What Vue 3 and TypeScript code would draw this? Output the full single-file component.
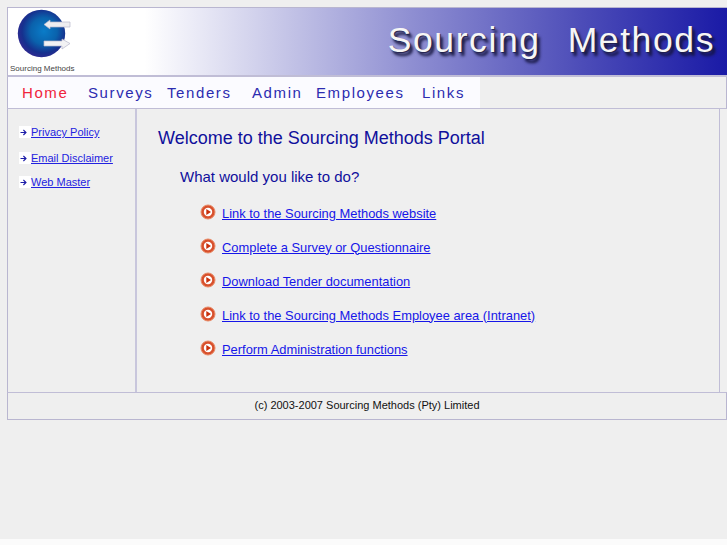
<script setup lang="ts">
const navItems = [
  { label: 'Home', width: 66, active: true },
  { label: 'Surveys', width: 79 },
  { label: 'Tenders', width: 85 },
  { label: 'Admin', width: 64 },
  { label: 'Employees', width: 106 },
  { label: 'Links', width: 50 },
]
const sideLinks = ['Privacy Policy', 'Email Disclaimer', 'Web Master']
const mainLinks = [
  'Link to the Sourcing Methods website',
  'Complete a Survey or Questionnaire',
  'Download Tender documentation',
  'Link to the Sourcing Methods Employee area (Intranet)',
  'Perform Administration functions',
]
</script>

<template>
  <div class="screen">
    <div class="page">
      <header class="banner">
        <div class="logo">
          <svg class="logo-mark" width="56" height="50" viewBox="0 0 56 50">
            <defs>
              <radialGradient id="sphere" cx="0.55" cy="0.45" r="0.56">
                <stop offset="0" stop-color="#0a7cc8" />
                <stop offset="0.5" stop-color="#0a62ac" />
                <stop offset="0.82" stop-color="#16308e" />
                <stop offset="1" stop-color="#2c2a90" />
              </radialGradient>
            </defs>
            <circle cx="24.500" cy="24.500" r="23.700" fill="url(#sphere)" />
            <path d="M27 15.500 L33 11 L33 13 L53 13 L53 18 L33 18 L33 20 Z" fill="#ededf0" stroke="#b8b8cc" stroke-width="0.700" />
            <path d="M27 32 L45 32 L45 30 L53 34.500 L45 40 L45 37 L27 37 Z" fill="#f2f2f4" stroke="#b8b8cc" stroke-width="0.700" />
          </svg>
          <span class="logo-text">Sourcing Methods</span>
        </div>
        <div class="banner-title"><span>Sourcing</span><span>Methods</span></div>
      </header>

      <nav class="nav">
        <div class="nav-items">
          <a
            v-for="item in navItems"
            :key="item.label"
            class="nav-link"
            :class="{ active: item.active }"
            :style="{ width: item.width + 'px' }"
          >{{ item.label }}</a>
        </div>
      </nav>

      <div class="body-row">
        <aside class="sidebar">
          <div v-for="link in sideLinks" :key="link" class="side-row">
            <span class="side-icon">
              <svg width="7" height="7" viewBox="0 0 7 7">
                <path d="M0.500 3.500 H5.800 M3.400 1 L6 3.500 L3.400 6" fill="none" stroke="#1c1ca8" stroke-width="1.100" />
              </svg>
            </span>
            <a href="#" class="side-link">{{ link }}</a>
          </div>
        </aside>
        <main class="main">
          <h1 class="title">Welcome to the Sourcing Methods Portal</h1>
          <h2 class="subtitle">What would you like to do?</h2>
          <ul class="actions">
            <li v-for="link in mainLinks" :key="link" class="action">
              <svg class="bullet" width="16" height="16" viewBox="0 0 16 16">
                <circle cx="8" cy="8" r="7" fill="#d8502c" stroke="#e88a66" stroke-width="1" />
                <circle cx="8" cy="8" r="4.200" fill="#fff" />
                <path d="M6.300 5 L11 8 L6.300 11 Z" fill="#c8300c" />
              </svg>
              <a href="#" class="action-link">{{ link }}</a>
            </li>
          </ul>
        </main>
      </div>

      <footer class="footer">(c) 2003-2007 Sourcing Methods (Pty) Limited</footer>
    </div>
  </div>
</template>

<style>
html, body {
  background: #fbfbfb;
}
</style>

<style scoped>
.screen {
  height: 539px;
  box-sizing: border-box;
  padding: 7px 0 0 7px;
  background: #efefef;
}
.page {
  width: 720px;
  font-family: "Liberation Sans", Arial, sans-serif;
  color: #000;
}
.banner {
  height: 67px;
  border: 1px solid #b9b6d0;
  border-right: none;
  border-bottom: 2px solid #c0bdd6;
  background: linear-gradient(90deg, #fff 0%, #fff 19%, #d6d6ee 33%, #8f8fd2 56%, #4c4cb8 80%, #1a1aa6 100%);
  display: flex;
  align-items: flex-start;
  justify-content: space-between;
}
.logo {
  width: 100px;
  height: 67px;
  position: relative;
}
.logo-mark {
  position: absolute;
  left: 9px;
  top: 1px;
}
.logo-text {
  position: absolute;
  left: 2px;
  top: 55px;
  font-size: 8px;
  line-height: 12px;
  color: #444;
  white-space: nowrap;
}
.banner-title {
  display: flex;
  gap: 27px;
  padding: 12px 12px 0 0;
  font-size: 35.500px;
  line-height: 40px;
  letter-spacing: 1.600px;
  color: #f6f6f6;
  text-shadow: 1px 1px 1px #20204a, 3px 4px 3px #14143c;
}
.nav {
  height: 31px;
  border-left: 1px solid #b9b6d0;
  border-right: 1px solid #b9b6d0;
  border-bottom: 1px solid #c0bdd6;
}
.nav-items {
  display: flex;
  width: 472px;
  height: 31px;
  background: #fbfbff;
  padding-left: 14px;
  box-sizing: border-box;
  white-space: nowrap;
}
.nav-link {
  display: block;
  flex: none;
  font-size: 15px;
  line-height: 31px;
  letter-spacing: 1.600px;
  color: #2c2cb0;
}
.nav-link.active {
  color: #f0243c;
}
.body-row {
  display: flex;
  height: 283px;
  width: 713px;
  box-sizing: border-box;
  border-left: 1px solid #b9b6d0;
  border-right: 1px solid #c0bdd6;
}
.sidebar {
  width: 129px;
  flex: none;
  box-sizing: border-box;
  border-right: 2px solid #c8c6dc;
  padding-top: 15px;
}
.side-row {
  display: flex;
  align-items: center;
  height: 16px;
  margin-bottom: 8px;
  padding-left: 11px;
}
.side-row:first-child {
  margin-bottom: 10px;
}
.side-icon {
  width: 12px;
  height: 12px;
  background: #fff;
  display: flex;
  align-items: center;
  padding-left: 1px;
  box-sizing: border-box;
}
.side-link {
  font-size: 11px;
  color: #2222e0;
}
.main {
  flex: 1;
  padding: 18px 0 0 21px;
}
.title {
  margin: 0;
  font-size: 18px;
  line-height: 22px;
  font-weight: 400;
  color: #10109c;
}
.subtitle {
  margin: 18px 0 0 22px;
  font-size: 15px;
  line-height: 20px;
  font-weight: 400;
  color: #10109c;
}
.actions {
  list-style: none;
  margin: 9px 0 0 42px;
  padding: 0;
}
.action {
  display: flex;
  align-items: center;
  height: 34px;
}
.bullet {
  flex: none;
  margin-right: 6px;
  margin-top: -2px;
}
.action-link {
  font-size: 12.900px;
  color: #1616e8;
}
.footer {
  width: 718px;
  height: 26px;
  border: 1px solid #b9b6d0;
  border-top: 1px solid #c0bdd6;
  box-sizing: content-box;
  text-align: center;
  font-size: 11px;
  line-height: 25px;
  color: #111;
}
</style>
